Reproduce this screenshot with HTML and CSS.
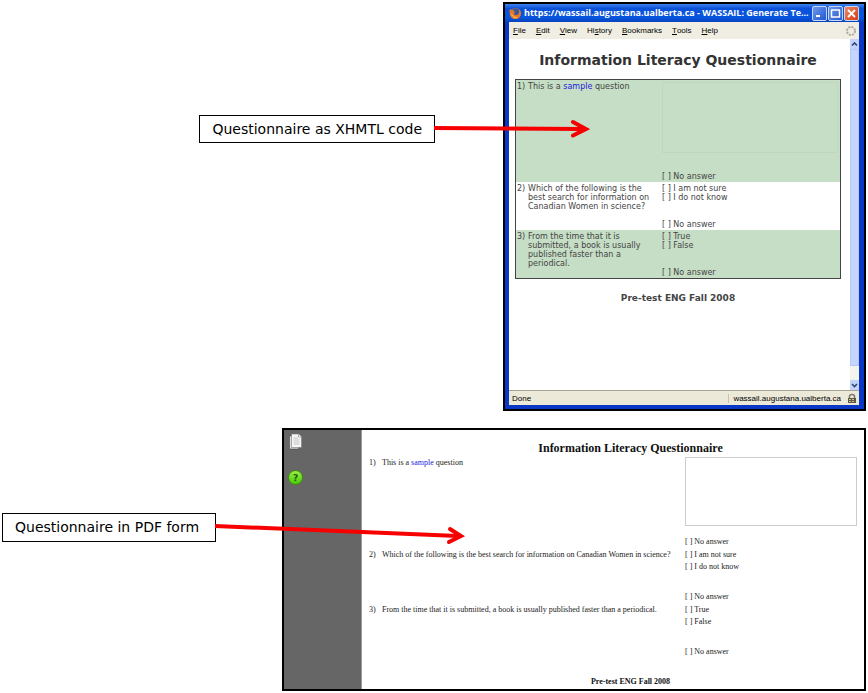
FILE: index.html
```html
<!DOCTYPE html>
<html lang="en">
<head>
<meta charset="utf-8">
<title>Questionnaire outputs</title>
<link rel="stylesheet" href="styles.css">
</head>
<body>
<main class="diagram">
  <section class="example example-web">
    <div class="callout callout-web">Questionnaire as XHMTL code
      <svg class="arrow" width="156" height="24" viewBox="0 0 156 24" aria-hidden="true"><path d="M0 12L148 13" stroke="#f60000" stroke-width="4"/><path d="M139 6L152 13L139 19.500" fill="none" stroke="#f60000" stroke-width="4" stroke-linecap="round" stroke-linejoin="miter"/></svg>
    </div>
    <div class="browser">
      <div class="titlebar">
        <svg width="13" height="13" viewBox="0 0 13 13" aria-hidden="true"><circle cx="6.500" cy="6.500" r="5.500" fill="#e2762a"/><path d="M3 3Q6 0 9.500 2.500Q11 5 9 8Q6.500 9.500 4.500 7.500L6 6L4 5Z" fill="#345a9c"/><path d="M1 2Q2 3 4 3L6 5L4 6.500Q6 9 9 7.500Q11 6 10.500 3Q13 7 10 10.500Q6 13.500 2.500 10.500Q-.5 7 1 2Z" fill="#e9772a"/><path d="M2.500 7Q4 11 8 10.500" fill="none" stroke="#ffd35a"/></svg>
        <span class="title">https://wassail.augustana.ualberta.ca - WASSAIL: Generate Te...</span>
        <button class="control" aria-label="Minimize"><svg width="13" height="13" viewBox="0 0 13 13"><path d="M3 9H7" stroke="#fff" stroke-width="2"/></svg></button>
        <button class="control" aria-label="Maximize"><svg width="13" height="13" viewBox="0 0 13 13"><path d="M2.500 3V10H10.500V3M2 3H11" fill="none" stroke="#fff" stroke-width="1.500"/></svg></button>
        <button class="control control-close" aria-label="Close"><svg width="13" height="13" viewBox="0 0 13 13"><path d="M3 3L10 10M10 3L3 10" stroke="#fff" stroke-width="1.800"/></svg></button>
      </div>
      <nav class="menubar">
        <button><u>F</u>ile</button><button><u>E</u>dit</button><button><u>V</u>iew</button><button>Hi<u>s</u>tory</button><button><u>B</u>ookmarks</button><button><u>T</u>ools</button><button><u>H</u>elp</button>
        <svg class="throbber" width="12" height="12" viewBox="0 0 12 12" aria-hidden="true"><circle cx="6" cy="6" r="4" fill="none" stroke="#aaa99e" stroke-width="2" stroke-dasharray="2 1.140"/></svg>
      </nav>
      <div class="viewport">
        <article class="web-page">
          <h1>Information Literacy Questionnaire</h1>
          <div class="questions">
            <div class="question shaded tall"><span>1)</span><p>This is a <b>sample</b> question</p><div class="answers"><textarea aria-label="Answer to question 1"></textarea><span class="none">[ ] No answer</span></div></div>
            <div class="question"><span>2)</span><p>Which of the following is the best search for information on Canadian Women in science?</p><div class="answers"><span>[ ] I am not sure</span><span>[ ] I do not know</span><span class="none">[ ] No answer</span></div></div>
            <div class="question shaded"><span>3)</span><p>From the time that it is submitted, a book is usually published faster than a periodical.</p><div class="answers"><span>[ ] True</span><span>[ ] False</span><span class="none">[ ] No answer</span></div></div>
          </div>
          <footer>Pre-test ENG Fall 2008</footer>
        </article>
        <div class="scrollbar">
          <button aria-label="Scroll up"><svg width="9" height="10" viewBox="0 0 9 10"><path d="M2 6.500L4.500 4L7 6.500" fill="none" stroke="#34466e" stroke-width="1.600"/></svg></button>
          <div class="thumb"></div>
          <button aria-label="Scroll down"><svg width="9" height="10" viewBox="0 0 9 10"><path d="M2 4L4.500 6.500L7 4" fill="none" stroke="#34466e" stroke-width="1.600"/></svg></button>
        </div>
      </div>
      <div class="statusbar"><span>Done</span><span class="host">wassail.augustana.ualberta.ca</span>
        <svg width="10" height="11" viewBox="0 0 10 11" aria-hidden="true"><path d="M2.500 6V3.500Q2.500 1.500 5 1.500Q7.500 1.500 7.500 3.500V6" fill="none" stroke="#77766c" stroke-width="1.500"/><rect x="1" y="5" width="8" height="5" fill="#5c5a4e"/><path d="M2 6.500H8M2 8.500H8" stroke="#c9bd83" stroke-dasharray="2 1"/></svg>
      </div>
    </div>
  </section>

  <section class="example example-pdf">
    <div class="callout callout-pdf">Questionnaire in PDF form
      <svg class="arrow" width="252" height="36" viewBox="0 0 252 36" aria-hidden="true"><path d="M0 16L243 26" stroke="#f60000" stroke-width="4"/><path d="M235 19L246 26L234 32" fill="none" stroke="#f60000" stroke-width="4" stroke-linecap="round"/></svg>
    </div>
    <div class="reader">
      <aside class="sidebar">
        <button aria-label="Pages"><svg width="16" height="18" viewBox="0 0 16 18"><path d="M1.500 3H10.500V16H1.500Z" fill="#ddd" stroke="#484848" stroke-width=".6"/><path d="M3.500 1H10.500L13.500 4V14.500H3.500Z" fill="#f5f5f5" stroke="#777" stroke-width=".6"/><path d="M10.500 1V4H13.500" fill="#fff" stroke="#aaa"/><path d="M5.500 5H9.500M5.500 7H11.500M5.500 9H11.500M5.500 11H11.500" stroke="#c4c4c4"/></svg></button>
        <button class="help" aria-label="Help">?</button>
      </aside>
      <article class="pdf-page">
        <h2>Information Literacy Questionnaire</h2>
        <div class="questions">
          <div class="question tall"><span>1)</span><p>This is a <b>sample</b> question</p><div class="answers"><textarea aria-label="Answer to question 1"></textarea><span class="none">[ ] No answer</span></div></div>
          <div class="question"><span>2)</span><p>Which of the following is the best search for information on Canadian Women in science?</p><div class="answers"><span>[ ] I am not sure</span><span>[ ] I do not know</span><span class="none">[ ] No answer</span></div></div>
          <div class="question"><span>3)</span><p>From the time that it is submitted, a book is usually published faster than a periodical.</p><div class="answers"><span>[ ] True</span><span>[ ] False</span><span class="none">[ ] No answer</span></div></div>
        </div>
        <footer>Pre-test ENG Fall 2008</footer>
      </article>
    </div>
  </section>
</main>
</body>
</html>
```
FILE: styles.css
```css
* { box-sizing: border-box; }
body { margin: 0; background: #fff; color: #000; font-family: "DejaVu Sans", sans-serif; }
h1, h2, p { margin: 0; }
button { display: flex; align-items: center; justify-content: center; margin: 0; padding: 0; border: 0; background: none; color: inherit; font: inherit; }
svg { display: block; flex: none; }

.diagram { display: grid; gap: 17px; padding: 2px; }
.example { display: grid; align-items: start; }
.example-web { grid-template-columns: 433fr 363fr; gap: 68px; }
.example-pdf { grid-template-columns: 214fr 584fr; gap: 66px; }

.callout { position: relative; justify-self: end; padding: 0 12px; border: 1px solid #000; font-size: 14px; line-height: 26px; white-space: nowrap; }
.callout-web { margin-top: 113px; }
.callout-pdf { justify-self: stretch; margin-top: 85px; line-height: 27px; }
.arrow { position: absolute; left: 100%; top: 0; z-index: 1; }
.callout-pdf .arrow { top: -4px; }

.browser { display: flex; flex-direction: column; min-width: 0; border: 2px solid #000; background: #0a37c6; font-family: "Liberation Sans", sans-serif; font-size: 8px; }
.titlebar { display: flex; align-items: center; gap: 1px; padding: 1px 5px 1px 4px; background: linear-gradient(#3f83ed, #0b52d8 25%, #0756df 75%, #0642bd); color: #fff; }
.title { flex: 1; min-width: 0; overflow: hidden; font-family: "Open Sans", sans-serif; font-size: 9px; font-weight: 700; line-height: 16px; white-space: nowrap; margin-left: 1px; }
.control { width: 15px; height: 15px; border: 1px solid #c7d8f5; border-radius: 2px; background: linear-gradient(135deg, #6d99ed, #2457ce); }
.control-close { background: linear-gradient(135deg, #ee8a69, #d23e15); }
.menubar { display: flex; align-items: center; gap: 10px; margin: 0 5px 0 4px; padding: 0 2px 0 4px; height: 17px; background: #f0eee2; }
.throbber { margin-left: auto; }
.viewport { display: flex; height: 351px; margin: 0 5px 0 4px; background: #fff; }
.web-page { flex: 1; min-width: 0; padding: 11px 9px 0 6px; color: #444; font-family: "DejaVu Sans", sans-serif; }
.web-page h1 { color: #333; font-size: 14px; line-height: 20px; text-align: center; white-space: nowrap; }
.web-page .questions { margin-top: 9px; border: 1px solid #444; font-size: 8px; line-height: 9px; }
.question { display: grid; }
.question b { color: #1c1ce0; font-weight: 400; }
.web-page .question { grid-template-columns: 11px 134fr 176fr; min-height: 48px; padding: 2px 2px 1px 1px; }
.web-page .question p { padding-right: 6px; }
.web-page .shaded { background: #c6dec5; }
.web-page .tall { min-height: 102px; }
.answers { display: flex; flex-direction: column; white-space: nowrap; }
.none { margin-top: auto; }
textarea { display: block; width: 100%; margin: 0; padding: 2px; border: 1px solid #c0d6bf; background: none; resize: none; overflow: hidden; }
.web-page textarea { height: 71px; }
.web-page footer { padding-top: 13px; font-size: 9px; font-weight: 700; line-height: 12px; text-align: center; }

.scrollbar { display: flex; flex-direction: column; width: 9px; background: #f4f4ef; }
.scrollbar button { height: 10px; background: #c3d3fb; }
.thumb { height: 317px; margin-bottom: auto; border: 1px solid #b5c8f6; background: #c6d5fd; }
.statusbar { display: flex; align-items: center; margin: 0 5px 4px 4px; padding: 0 2px 0 3px; height: 15px; border-top: 1px solid #a5a496; background: #ece9d8; }
.host { margin-left: auto; margin-right: 6px; padding-left: 4px; border-left: 1px solid #c5c2b2; }

.reader { display: flex; min-width: 0; border: 2px solid #000; font-family: "Liberation Serif", serif; }
.sidebar { display: flex; flex-direction: column; align-items: flex-start; gap: 19px; width: 78px; padding: 3px 4px; border-right: 1px solid #999; background: #666; }
.help { width: 15px; height: 15px; border: 1px solid #3b8f0b; border-radius: 50%; background: linear-gradient(#9bed42, #49ca0b); color: #17620a; font: 700 9px "DejaVu Sans", sans-serif; }
.pdf-page { flex: 1; min-width: 0; padding: 10px 7px 0; color: #222; }
.pdf-page h2 { padding-left: 35px; color: #111; font-size: 12px; line-height: 16px; text-align: center; }
.pdf-page .questions { margin-top: 1px; font-size: 8px; line-height: 12px; }
.pdf-page .question { grid-template-columns: 13px 303fr 172fr; min-height: 55px; padding-bottom: 1px; }
.pdf-page .tall { min-height: 92px; }
.pdf-page textarea { height: 69px; border: 1px solid #ccc; }
.pdf-page footer { padding: 16px 0 0 35px; color: #111; font-size: 8px; font-weight: 700; line-height: 14px; text-align: center; }
```
